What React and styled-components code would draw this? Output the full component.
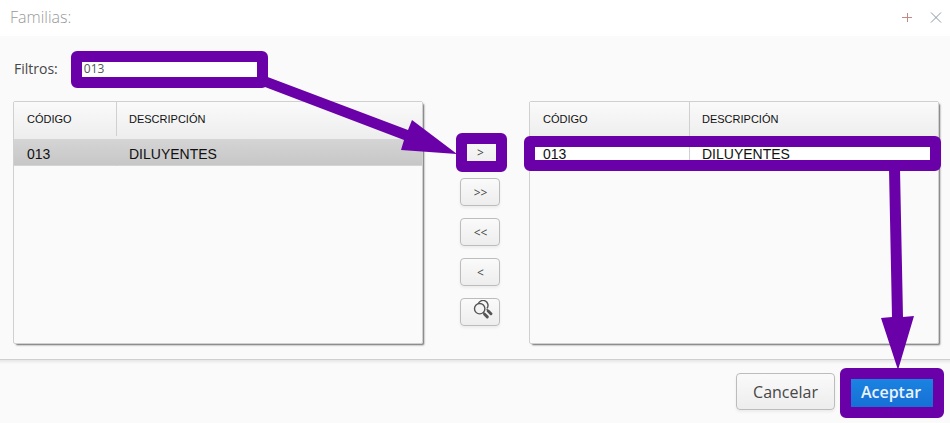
import React, { useState } from "react";
import styled, { createGlobalStyle, css } from "styled-components";

const PURPLE = "#6a00a8";

const GlobalStyle = createGlobalStyle`
  * {
    box-sizing: border-box;
  }
  body {
    margin: 0;
    background: #fafafa;
    color: #474747;
    font-family: "Open Sans", sans-serif;
  }
`;

const Dialog = styled.div`
  display: flex;
  flex-direction: column;
  overflow: hidden;
  min-height: 100vh;
`;

const TitleBar = styled.header`
  display: flex;
  align-items: center;
  justify-content: space-between;
  height: 36px;
  padding: 0 8px 2px 10px;
  background: #fff;
`;

const Title = styled.h1`
  margin: 0;
  color: #999;
  font-size: 16px;
  font-weight: 300;
  line-height: 34px;
`;

const WindowTools = styled.div`
  display: flex;
  gap: 17px;
`;

const ToolButton = styled.button`
  display: flex;
  padding: 0;
  border: 0;
  background: none;
  color: ${(props) => props.$color};
`;

const Body = styled.main`
  flex-grow: 1;
  padding: 15px 11px 14px 13px;
`;

const FilterRow = styled.div`
  display: flex;
  align-items: center;
  gap: 19px;
  height: 37px;
  margin-bottom: 13px;
  padding-left: 1px;
`;

const Label = styled.label`
  padding-bottom: 2px;
  font-size: 14px;
`;

/* Thick frame drawn over the element it wraps */
const Highlight = styled.div`
  position: relative;
  display: flex;

  &::after {
    content: "";
    position: absolute;
    inset: ${(props) => props.$inset};
    z-index: 1;
    border: 11px solid ${PURPLE};
    border-radius: 6px;
    pointer-events: none;
  }
`;

const FilterInput = styled.input`
  width: 185px;
  height: 25px;
  padding: 0 6px 3px;
  border: 1px solid #c0c0c0;
  background: #fff;
  color: #555;
  font-family: inherit;
  font-size: 12px;
  outline: 0;
`;

const Columns = styled.div`
  display: grid;
  grid-template-columns: 1fr 106px 1fr;
`;

const Panel = styled.div`
  height: 243px;
  border: 1px solid #d0d0d0;
  border-radius: 2px;
  box-shadow: 2px 2px 2px -1px #666;
`;

const Table = styled.table`
  width: 100%;
  table-layout: fixed;
  border-collapse: separate;
  border-spacing: 0;
  font-family: "Liberation Sans", Arial, sans-serif;
  color: #111;
  text-align: left;
`;

const HeadRow = styled.tr`
  height: 37px;
  background: linear-gradient(#fafafa, #ededed);
`;

const HeadCell = styled.th`
  width: ${(props) => props.$width};
  padding: 0 0 4px ${(props) => (props.$width ? "13px" : "12px")};
  font-size: 11px;
  font-weight: 400;
  ${(props) =>
    props.$width &&
    css`
      background: linear-gradient(#d0d0d0, #d0d0d0) right top / 1px 34px
        no-repeat;
    `}
`;

const DataRow = styled.tr`
  height: 27px;
  background: ${(props) =>
    props.$selected ? "linear-gradient(#d5d5d5, #c6c6c6)" : "#fff"};

  td {
    padding: 3px 0 0 12px;
    border-bottom: 1px solid #d4d4d4;
    font-size: 14px;
  }
  td:first-child {
    padding-left: 13px;
    border-right: 1px solid
      ${(props) => (props.$selected ? "transparent" : "#d0d0d0")};
  }
`;

const Actions = styled.div`
  display: flex;
  flex-direction: column;
  align-items: center;
  gap: 12px;
  padding: 37px 0 0 8px;
`;

const Button = styled.button`
  display: flex;
  align-items: center;
  justify-content: center;
  padding: 0;
  border: 1px solid #bcbcbc;
  border-radius: 4px;
  background: linear-gradient(#fafafa, #ededed);
  box-shadow: 0 2px 3px rgba(0, 0, 0, 0.06);
  color: #474747;
  font-family: inherit;
`;

const ActionButton = styled(Button)`
  width: 40px;
  height: 28px;
  padding: ${(props) => (props.$icon ? "0 0 4px 6px" : "0 0 0 1px")};
  font-size: 12px;
`;

const Footer = styled.footer`
  display: flex;
  justify-content: flex-end;
  gap: 9px;
  height: 64px;
  padding: 13px 10px 13px;
  border-top: 1px solid #cfcfcf;
  background: linear-gradient(#e6e6e6, #fafafa 4px);
`;

const FooterButton = styled(Button)`
  width: ${(props) => (props.$primary ? "96px" : "99px")};
  height: 37px;
  font-size: 16px;
  ${(props) =>
    props.$primary &&
    css`
      padding-right: 2px;
      border-color: #1362b1;
      background: linear-gradient(#1b87e3, #166ed5);
      color: #eaf3fc;
      font-weight: 600;
    `}
`;

const Arrow = styled.svg`
  position: absolute;
  right: ${(props) => props.$right};
  bottom: ${(props) => props.$bottom};
  z-index: 2;
  fill: ${PURPLE};
  pointer-events: none;
`;

const SearchIcon = () => (
  <svg width="20" height="20" viewBox="0 0 20 20" fill="none" stroke="#555">
    <path d="M5.2 4A5 5 0 1 1 14 8.4" strokeWidth="1.4" />
    <path d="M13.6 9l1.8 1.8" strokeWidth="1.2" />
    <path d="M15.2 11l2.7 2.7" strokeWidth="3" strokeLinecap="round" />
    <circle cx="6.7" cy="8.7" r="5.2" fill="#f4f4f4" strokeWidth="1.4" />
    <path d="M10.2 12.4l1.5 1.5" strokeWidth="1.4" />
    <path d="M11.6 14.2l2.7 2.7" strokeWidth="3" strokeLinecap="round" />
  </svg>
);

const rows = [{ code: "013", description: "DILUYENTES" }];

const FamilyTable = ({ label, codeWidth, selected }) => (
  <Table aria-label={label}>
    <thead>
      <HeadRow>
        <HeadCell $width={codeWidth}>CÓDIGO</HeadCell>
        <HeadCell>DESCRIPCIÓN</HeadCell>
      </HeadRow>
    </thead>
    <tbody>
      {rows.map((row) => (
        <DataRow key={row.code} $selected={selected}>
          <td>{row.code}</td>
          <td>{row.description}</td>
        </DataRow>
      ))}
    </tbody>
  </Table>
);

/* Marks the first row of the chosen families */
const RowHighlight = styled(Highlight)`
  display: block;
`;

const App = () => {
  const [filter, setFilter] = useState("013");

  return (
    <>
      <GlobalStyle />
      <Dialog>
        <TitleBar>
          <Title>Familias:</Title>
          <WindowTools>
            <ToolButton $color="#c28a82" aria-label="Maximizar">
              <svg width="12" height="12" stroke="currentColor">
                <path d="M1 6.5h10M6.5 2v9" />
              </svg>
            </ToolButton>
            <ToolButton $color="#8796a3" aria-label="Cerrar">
              <svg width="12" height="12" stroke="currentColor">
                <path d="M1 1.5l10 10M11 1.5l-10 10" />
              </svg>
            </ToolButton>
          </WindowTools>
        </TitleBar>
        <Body>
          <FilterRow>
            <Label htmlFor="filter">Filtros:</Label>
            <Highlight $inset="-6px">
              <FilterInput
                id="filter"
                value={filter}
                onChange={(e) => setFilter(e.target.value)}
              />
            </Highlight>
          </FilterRow>
          <Columns>
            <Panel>
              <FamilyTable
                label="Familias disponibles"
                codeWidth="103px"
                selected
              />
            </Panel>
            <Actions>
              <Highlight $inset="-5px -7px -6px -4px">
                <ActionButton>&gt;</ActionButton>
                <Arrow
                  $right="43px"
                  $bottom="11px"
                  width="192"
                  height="79"
                  viewBox="265 76 192 79"
                >
                  <path d="M265 76L408 130L412 120L457 154L401 150L404 140L265 87Z" />
                </Arrow>
              </Highlight>
              <ActionButton>&gt;&gt;</ActionButton>
              <ActionButton>&lt;&lt;</ActionButton>
              <ActionButton>&lt;</ActionButton>
              <ActionButton $icon aria-label="Buscar">
                <SearchIcon />
              </ActionButton>
            </Actions>
            <Panel>
              <RowHighlight $inset="34px -3px -5px -6px">
                <FamilyTable
                  label="Familias seleccionadas"
                  codeWidth="160px"
                />
              </RowHighlight>
            </Panel>
          </Columns>
        </Body>
        <Footer>
          <FooterButton>Cancelar</FooterButton>
          <Highlight $inset="-5px -4px -8px -4px">
            <FooterButton $primary>Aceptar</FooterButton>
            <Arrow
              $right="26px"
              $bottom="40px"
              width="33"
              height="201"
              viewBox="881 169 33 201"
            >
              <path d="M889 169H900L903 317L914 316L898 370L881 318L892 317Z" />
            </Arrow>
          </Highlight>
        </Footer>
      </Dialog>
    </>
  );
};

export default App;
